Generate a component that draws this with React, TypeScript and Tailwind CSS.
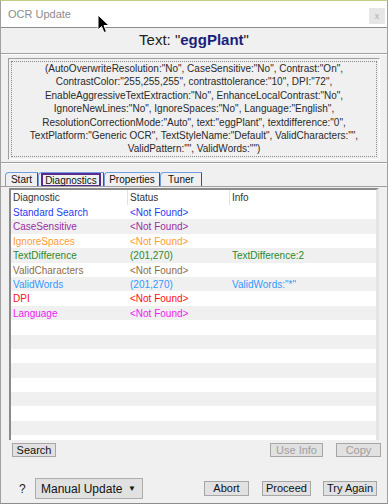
import React from 'react'

const font = { fontFamily: '"Liberation Sans", Arial, sans-serif' }

const rows = [
  { name: 'Standard Search', status: '<Not Found>', info: '', color: 'text-[#1f3cf0]' },
  { name: 'CaseSensitive', status: '<Not Found>', info: '', color: 'text-[#9a2ea0]' },
  { name: 'IgnoreSpaces', status: '<Not Found>', info: '', color: 'text-[#ff9b30]' },
  { name: 'TextDifference', status: '(201,270)', info: 'TextDifference:2', color: 'text-[#2c8a2c]' },
  { name: 'ValidCharacters', status: '<Not Found>', info: '', color: 'text-[#8e6c48]' },
  { name: 'ValidWords', status: '(201,270)', info: 'ValidWords:"*"', color: 'text-[#3399ff]' },
  { name: 'DPI', status: '<Not Found>', info: '', color: 'text-[#ff1010]' },
  { name: 'Language', status: '<Not Found>', info: '', color: 'text-[#f020f0]' },
]

const tabs = [
  { label: 'Start', w: 'w-[33px]', selected: false },
  { label: 'Diagnostics', w: 'w-[66px]', selected: true },
  { label: 'Properties', w: 'w-[56px]', selected: false },
  { label: 'Tuner', w: 'w-[42px]', selected: false },
]

const Btn: React.FC<{ label: string; w: string; disabled?: boolean; h?: string }> = ({ label, w, disabled, h }) => (
  <div
    className={`${w} ${h ?? 'h-[14px]'} flex items-center justify-center border border-[#a6a6a6] bg-[#e1e1e1] text-[11px] leading-none ${
      disabled ? 'text-[#a0a0a0] bg-[#dcdcdc]' : 'text-[#111]'
    }`}
  >
    {label}
  </div>
)

export default function App() {
  const filler = Array.from({ length: 9 })
  return (
    <div className="relative w-[388px] h-[504px] bg-white overflow-hidden" style={font}>
      <div className="flex flex-col w-full h-full border-t border-[#c3cd86] border-x border-b border-x-[#a0a0a0] border-b-[#8c8c8c]">
        {/* Title bar */}
        <div className="h-[26px] flex items-center justify-between pl-[7px] pr-[2px] bg-white">
          <span className="text-[11px] text-[#8c8c8c]">OCR Update</span>
          <div className="w-[16px] h-[16px] mt-[4px] bg-[#e6e6e6] flex items-center justify-center text-[9px] text-[#b0b0b0] leading-none">
            x
          </div>
        </div>

        {/* Content */}
        <div className="flex-1 flex flex-col bg-[#f0f0f0] border-t border-[#8c8c8c]">
          <div className="h-[25px] flex items-center justify-center text-[15px] text-[#222]">
            Text: "<span className="font-bold text-[#1a1f7a]">eggPlant</span>"
          </div>
          <div className="h-[2px] border-t border-[#a0a0a0] border-b border-b-white" />

          {/* Parameters box */}
          <div className="mx-[7px] mt-[3px] h-[102px] border border-t-[#a0a0a0] border-l-[#a0a0a0] border-b-white border-r-white p-[2px]">
            <div className="h-full border border-dotted border-[#8a8a8a] text-center text-[10px] leading-[13.4px] text-[#2a2a2a]">
              (AutoOverwriteResolution:"No", CaseSensitive:"No", Contrast:"On",
              <br />
              ContrastColor:"255,255,255", contrasttolerance:"10", DPI:"72",
              <br />
              EnableAggressiveTextExtraction:"No", EnhanceLocalContrast:"No",
              <br />
              IgnoreNewLines:"No", IgnoreSpaces:"No", Language:"English",
              <br />
              ResolutionCorrectionMode:"Auto", text:"eggPlant", textdifference:"0",
              <br />
              TextPlatform:"Generic OCR", TextStyleName:"Default", ValidCharacters:"",
              <br />
              ValidPattern:"", ValidWords:"")
            </div>
          </div>

          <div className="mt-[2px] h-[2px] border-t border-[#a0a0a0] border-b border-b-white" />

          {/* Tabs */}
          <div className="mt-[8px] flex pl-[4px] h-[14px]">
            {tabs.map((t) => (
              <div
                key={t.label}
                className={`${t.w} h-full flex items-center justify-center border-l border-t border-[#6f9ee3] rounded-tl-[4px] border-r border-r-[#505050] text-[10px] text-[#111]`}
              >
                {t.selected ? (
                  <div className="w-[60px] h-[14px] mt-[1px] border-2 border-[#5b2a8e] flex items-center justify-center">
                    {t.label}
                  </div>
                ) : (
                  t.label
                )}
              </div>
            ))}
          </div>
          <div className="h-[1px] bg-[#a0a0a0]" />

          {/* List view */}
          <div className="mx-[8px] mt-[1px] h-[252px] bg-white border-t-2 border-l-2 border-[#8a8a8a] border-r-[3px] border-r-[#e4e4e4] overflow-hidden text-[10px]">
            <div className="grid grid-cols-[117px_102px_1fr] h-[15px] items-center text-[#333]">
              <div className="pl-[2px] border-r border-[#e2e2e2] h-full flex items-center">Diagnostic</div>
              <div className="pl-[2px] border-r border-[#e2e2e2] h-full flex items-center">Status</div>
              <div className="pl-[2px] h-full flex items-center">Info</div>
            </div>
            {rows.map((r, i) => (
              <div
                key={r.name}
                className={`grid grid-cols-[117px_102px_1fr] h-[14.4px] items-center ${r.color} ${
                  i % 2 === 1 ? 'bg-[#f0f0f0]' : 'bg-white'
                }`}
              >
                <div className="pl-[2px]">{r.name}</div>
                <div className="pl-[2px]">{r.status}</div>
                <div className="pl-[2px]">{r.info}</div>
              </div>
            ))}
            {filler.map((_, i) => (
              <div key={i} className={`h-[14.4px] ${i % 2 === 1 ? 'bg-[#f0f0f0]' : 'bg-white'}`} />
            ))}
          </div>

          {/* Action buttons */}
          <div className="mt-[3px] flex items-center pl-[11px] pr-[6px]">
            <Btn label="Search" w="w-[44px]" />
            <div className="flex-1" />
            <Btn label="Use Info" w="w-[53px]" disabled />
            <div className="w-[13px]" />
            <Btn label="Copy" w="w-[45px]" disabled />
          </div>

          {/* Bottom bar */}
          <div className="mt-[21px] flex items-center pl-[18px] pr-[10px]">
            <span className="text-[12px] text-[#222] w-[16px]">?</span>
            <div className="w-[108px] h-[21px] flex items-center justify-between pl-[5px] pr-[6px] border border-[#adadad] bg-[#e1e1e1] text-[12px] text-[#111]">
              <span>Manual Update</span>
              <span className="text-[8px]">▼</span>
            </div>
            <div className="flex-1" />
            <Btn label="Abort" w="w-[45px]" h="h-[15px]" />
            <div className="w-[13px]" />
            <Btn label="Proceed" w="w-[49px]" h="h-[15px]" />
            <div className="w-[12px]" />
            <Btn label="Try Again" w="w-[54px]" h="h-[15px]" />
          </div>
        </div>
      </div>

      {/* Mouse cursor */}
      <svg className="absolute left-[97px] top-[14px]" width="13" height="20" viewBox="0 0 13 20">
        <path d="M1 1 L1 16 L4.5 12.5 L7 18.5 L9.5 17.5 L7 11.5 L12 11.5 Z" fill="#000" stroke="#fff" strokeWidth="1" />
      </svg>
    </div>
  )
}
